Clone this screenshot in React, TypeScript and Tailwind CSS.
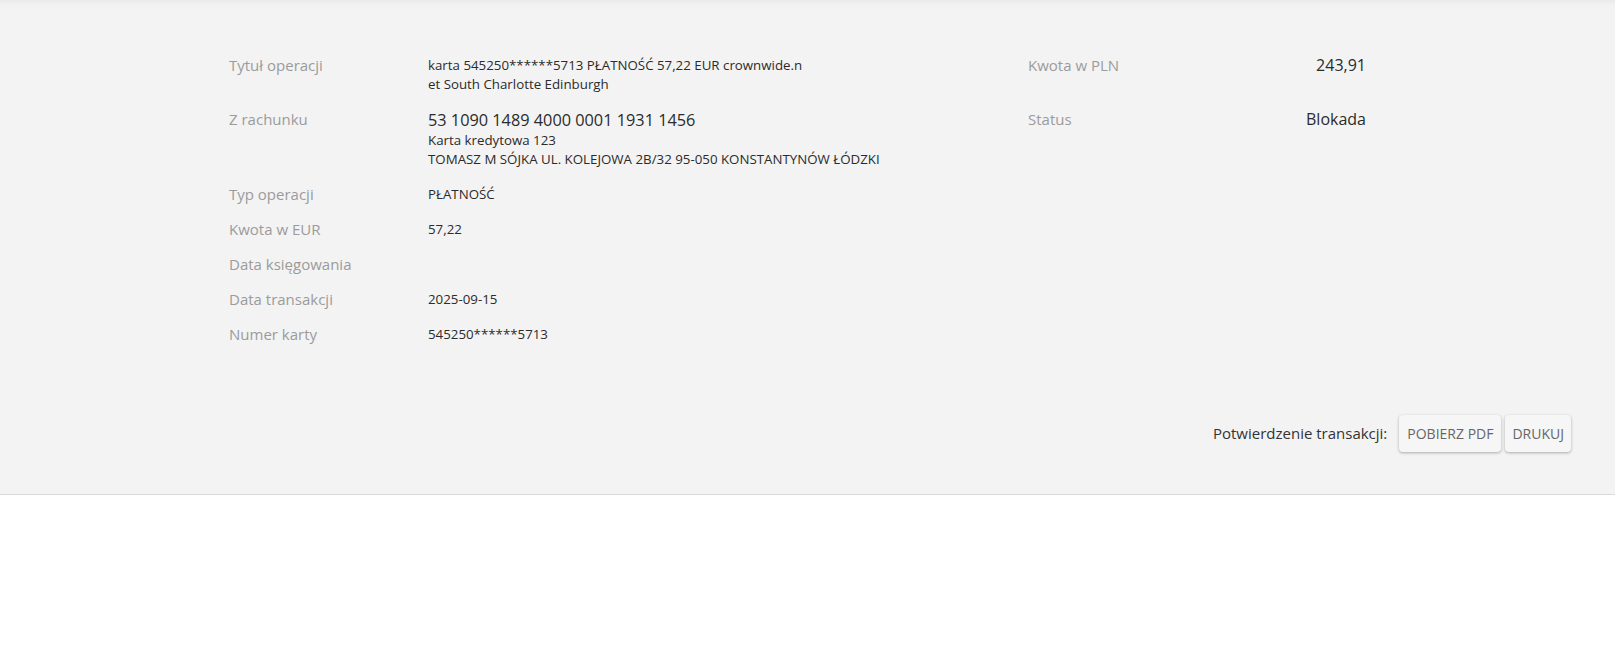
export default function App() {
  const rows: { label: string; value: React.ReactNode }[] = [
    {
      label: "Tytuł operacji",
      value: (
        <div className="pt-px text-[13.3px] leading-[19px]">
          <div>karta 545250******5713 PŁATNOŚĆ 57,22 EUR crownwide.n</div>
          <div>et South Charlotte Edinburgh</div>
        </div>
      ),
    },
    {
      label: "Z rachunku",
      value: (
        <div>
          <div className="text-[16.3px] leading-[22px]">53 1090 1489 4000 0001 1931 1456</div>
          <div className="text-[13.3px] leading-[19px]">Karta kredytowa 123</div>
          <div className="text-[13.3px] leading-[19px]">
            TOMASZ M SÓJKA UL. KOLEJOWA 2B/32 95-050 KONSTANTYNÓW ŁÓDZKI
          </div>
        </div>
      ),
    },
    { label: "Typ operacji", value: <div className="text-[13.3px] leading-5">PŁATNOŚĆ</div> },
    { label: "Kwota w EUR", value: <div className="text-[13.3px] leading-5">57,22</div> },
    { label: "Data księgowania", value: null },
    { label: "Data transakcji", value: <div className="text-[13.3px] leading-5">2025-09-15</div> },
    { label: "Numer karty", value: <div className="text-[13.3px] leading-5">545250******5713</div> },
  ];

  const side: Record<number, { label: string; value: string }> = {
    0: { label: "Kwota w PLN", value: "243,91" },
    1: { label: "Status", value: "Blokada" },
  };

  return (
    <div className="min-h-screen bg-white font-['Open_Sans',sans-serif] text-[#333]">
      <div className="bg-[#f3f3f3] border-b border-[#dadada] shadow-[inset_0_7px_6px_-5px_rgba(0,0,0,0.05)]">
        {/* Details grid */}
        <div className="pt-[55px] pl-[229px] grid grid-cols-[199px_600px_170px_168px] gap-y-[15px]">
          {rows.map((r, i) => (
            <div key={r.label} className="contents">
              <div className="text-[15px] leading-5 text-[#9b9b9b]">{r.label}</div>
              <div className="text-[#2b2b2b]">{r.value}</div>
              {side[i] ? (
                <>
                  <div className="text-[15px] leading-5 text-[#9b9b9b]">{side[i].label}</div>
                  <div className="text-[16px] leading-5 text-right text-[#2b2b2b]">{side[i].value}</div>
                </>
              ) : (
                <>
                  <div />
                  <div />
                </>
              )}
            </div>
          ))}
        </div>

        {/* Confirmation actions */}
        <div className="flex items-center justify-end pr-[44px] pt-[71px] pb-[42px]">
          <span className="text-[15px] text-[#333] mr-[12px]">Potwierdzenie transakcji:</span>
          <div className="flex gap-1">
            <button className="h-[37px] px-[8px] rounded-[4px] bg-[#f6f6f6] text-[14px] text-[#666] uppercase shadow-[0_1px_3px_rgba(0,0,0,0.3)]">
              Pobierz PDF
            </button>
            <button className="h-[37px] px-[7px] rounded-[4px] bg-[#f6f6f6] text-[14px] text-[#666] uppercase shadow-[0_1px_3px_rgba(0,0,0,0.3)]">
              Drukuj
            </button>
          </div>
        </div>
      </div>
    </div>
  );
}
